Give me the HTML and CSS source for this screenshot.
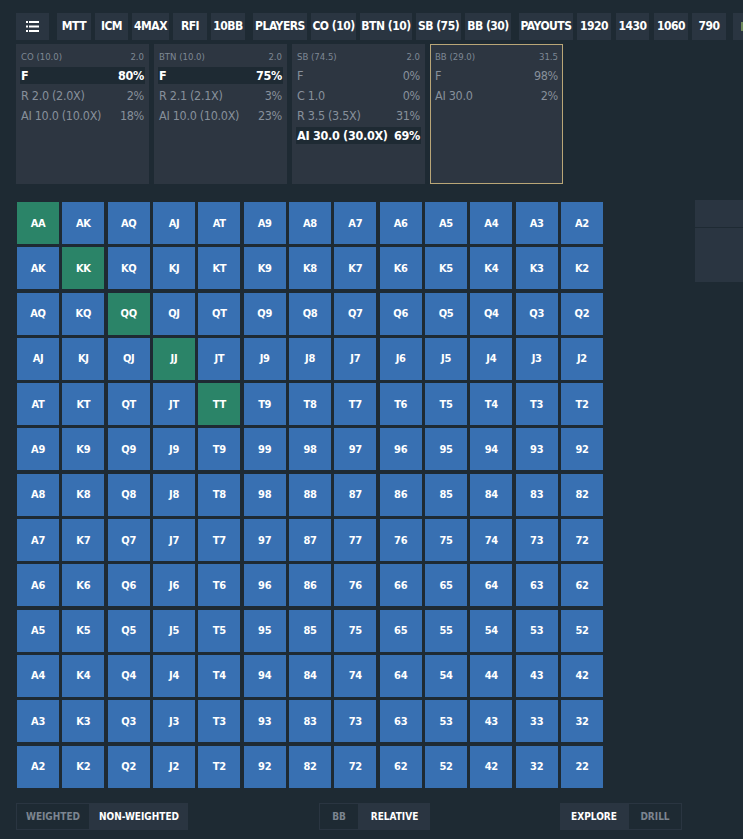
FILE: index.html
```html
<!DOCTYPE html>
<html>
<head>
    <title>Preflop Ranges</title>
    <link rel="stylesheet" href="styles.css">
</head>
<body>

<div class="topbar">
    <div class="btn menu-btn">
        <svg width="13" height="11" viewBox="0 0 13 11">
            <rect x="0" y="0" width="2" height="2" fill="#fff"/>
            <rect x="3" y="0" width="10" height="2" fill="#fff"/>
            <rect x="0" y="4.5" width="2" height="2" fill="#fff"/>
            <rect x="3" y="4.5" width="10" height="2" fill="#fff"/>
            <rect x="0" y="9" width="2" height="2" fill="#fff"/>
            <rect x="3" y="9" width="10" height="2" fill="#fff"/>
        </svg>
    </div>
    <div class="group">
        <div class="btn">MTT</div>
        <div class="btn w33">ICM</div>
        <div class="btn w37">4MAX</div>
        <div class="btn">RFI</div>
        <div class="btn">10BB</div>
    </div>
    <div class="group">
        <div class="btn w54">PLAYERS</div>
        <div class="btn w45">CO (10)</div>
        <div class="btn w52">BTN (10)</div>
        <div class="btn w45">SB (75)</div>
        <div class="btn w46">BB (30)</div>
    </div>
    <div class="group">
        <div class="btn w54">PAYOUTS</div>
        <div class="btn">1920</div>
        <div class="btn w33 gap5">1430</div>
        <div class="btn gap5">1060</div>
        <div class="btn">790</div>
        <div class="btn edge-btn"><span class="dot"></span></div>
    </div>
</div>

<div class="panels">
    <div class="panel">
        <div class="panel-head"><span>CO (10.0)</span><span>2.0</span></div>
        <div class="row active"><span>F</span><span>80%</span></div>
        <div class="row"><span>R 2.0 (2.0X)</span><span>2%</span></div>
        <div class="row"><span>AI 10.0 (10.0X)</span><span>18%</span></div>
    </div>
    <div class="panel">
        <div class="panel-head"><span>BTN (10.0)</span><span>2.0</span></div>
        <div class="row active"><span>F</span><span>75%</span></div>
        <div class="row"><span>R 2.1 (2.1X)</span><span>3%</span></div>
        <div class="row"><span>AI 10.0 (10.0X)</span><span>23%</span></div>
    </div>
    <div class="panel">
        <div class="panel-head"><span>SB (74.5)</span><span>2.0</span></div>
        <div class="row"><span>F</span><span>0%</span></div>
        <div class="row"><span>C 1.0</span><span>0%</span></div>
        <div class="row"><span>R 3.5 (3.5X)</span><span>31%</span></div>
        <div class="row active"><span>AI 30.0 (30.0X)</span><span>69%</span></div>
    </div>
    <div class="panel current">
        <div class="panel-head"><span>BB (29.0)</span><span>31.5</span></div>
        <div class="row"><span>F</span><span>98%</span></div>
        <div class="row"><span>AI 30.0</span><span>2%</span></div>
    </div>
</div>

<div class="main">
    <div class="grid" id="grid"></div>
    <div class="side">
        <div class="side-top"></div>
        <div class="side-bottom"></div>
    </div>
</div>

<div class="bottombar">
    <div class="toggle">
        <div class="opt w74">WEIGHTED</div>
        <div class="opt on w98">NON-WEIGHTED</div>
    </div>
    <div class="toggle mid">
        <div class="opt w40">BB</div>
        <div class="opt on w71">RELATIVE</div>
    </div>
    <div class="toggle right">
        <div class="opt on w68">EXPLORE</div>
        <div class="opt w54">DRILL</div>
    </div>
</div>

<script>
const ranks = 'AKQJT98765432';
const grid = document.getElementById('grid');
for (let i = 0; i < 13; i++) {
    for (let j = 0; j < 13; j++) {
        const cell = document.createElement('div');
        cell.className = 'cell';
        const hi = Math.min(i, j), lo = Math.max(i, j);
        cell.textContent = ranks[hi] + ranks[lo];
        // only the big pairs are pushed
        if (i === j && i < 5) cell.classList.add('push');
        grid.appendChild(cell);
    }
}
</script>

</body>
</html>
```

FILE: styles.css
```css
body {
    margin: 0;
    background-color: #1e2a33;
    font-family: "DejaVu Sans Condensed", "Liberation Sans", sans-serif;
    color: #fff;
    width: 743px;
    height: 839px;
    overflow: hidden;
}

/* Top bar */
.topbar {
    display: flex;
    padding: 13px 0 0 16px;
    white-space: nowrap;
}

.group {
    display: flex;
    gap: 4px;
    margin-left: 8px;
}

.btn {
    background-color: #2a3541;
    width: 34px;
    height: 27px;
    line-height: 27px;
    text-align: center;
    font-size: 12px;
    font-weight: bold;
    letter-spacing: -0.5px;
    color: #fff;
    flex-shrink: 0;
}

.w33 { width: 33px; }
.w37 { width: 37px; }
.w45 { width: 45px; }
.w46 { width: 46px; }
.w52 { width: 52px; }
.w54 { width: 54px; }
.gap5 { margin-left: 1px; }

.menu-btn {
    width: 33px;
    display: flex;
    align-items: center;
    justify-content: center;
}

.edge-btn {
    width: 30px;
    margin-left: 3px;
    position: relative;
}

.edge-btn .dot {
    position: absolute;
    left: 8px;
    top: 9px;
    width: 4px;
    height: 9px;
    background-color: #6e8a5c;
}

/* Panels */
.panels {
    display: flex;
    gap: 5px;
    margin: 4px 0 0 16px;
}

.panel {
    width: 133px;
    height: 140px;
    background-color: #2d3641;
    padding: 4px 4px 0 4px;
    box-sizing: border-box;
}

.panel.current {
    border: 1px solid #b9a677;
    padding: 3px 3px 0 3px;
}

.panel-head {
    display: flex;
    justify-content: space-between;
    font-size: 9.5px;
    color: #7e8894;
    padding: 3px 1px 0 1px;
    height: 16px;
    box-sizing: border-box;
    margin-bottom: 3px;
}

.row {
    display: flex;
    justify-content: space-between;
    white-space: nowrap;
    font-size: 12.5px;
    letter-spacing: -0.3px;
    color: #87909b;
    height: 20px;
    line-height: 17px;
    padding: 0 1px;
    box-sizing: border-box;
}

.row.active {
    background-color: #1e2a33;
    color: #fff;
    font-weight: bold;
    height: 17px;
    margin-bottom: 3px;
}

/* Range grid */
.main {
    display: flex;
    margin: 18px 0 0 17px;
}

.grid {
    display: grid;
    grid-template-columns: repeat(13, 1fr);
    grid-auto-rows: 42px;
    gap: 3.3px;
    width: 586px;
}

.cell {
    background-color: #3870b2;
    display: flex;
    align-items: center;
    justify-content: center;
    font-size: 11px;
    font-weight: bold;
    letter-spacing: -0.3px;
    color: #fff;
}

.cell.push {
    background-color: #2b8468;
}

.side {
    margin: -2px 0 0 92px;
    width: 48px;
}

.side-top {
    height: 27px;
    background-color: #2a3541;
    margin-bottom: 1px;
}

.side-bottom {
    height: 54px;
    background-color: #2a3541;
}

/* Bottom toggles */
.bottombar {
    display: flex;
    margin: 15px 0 0 16px;
}

.toggle {
    display: flex;
    height: 27px;
}

.toggle.mid {
    margin-left: 131px;
}

.toggle.right {
    margin-left: 130px;
}

.opt {
    font-size: 10px;
    font-weight: bold;
    line-height: 25px;
    text-align: center;
    color: #7c8590;
    border: 1px solid #2a3541;
    box-sizing: border-box;
    white-space: nowrap;
}

.opt.on {
    background-color: #2a3541;
    color: #fff;
}

.w74 { width: 74px; }
.w98 { width: 98px; }
.w40 { width: 40px; }
.w71 { width: 71px; }
.w68 { width: 68px; }
```
